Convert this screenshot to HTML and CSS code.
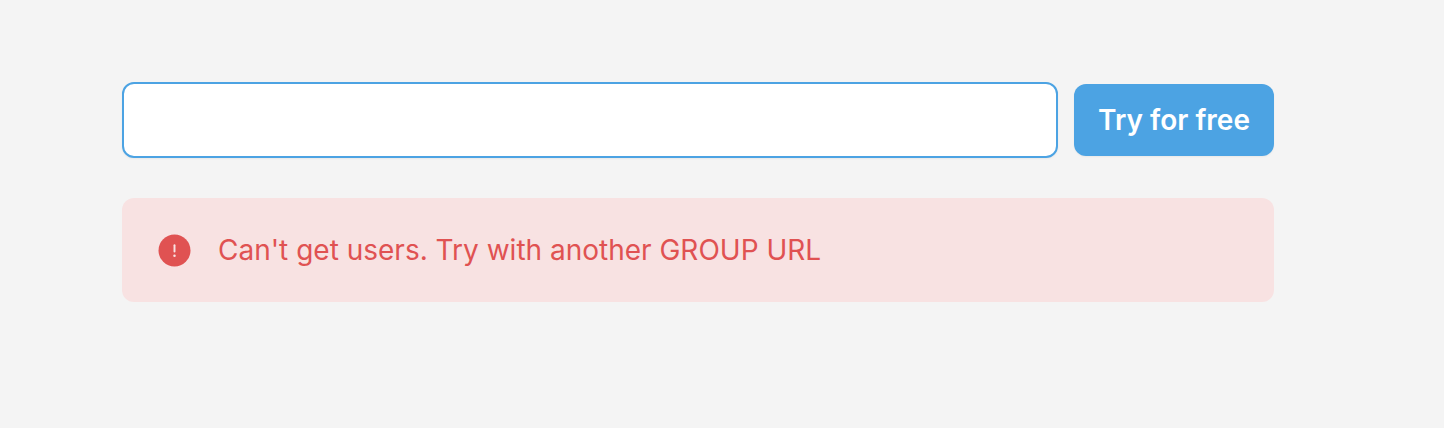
FILE: index.html
```html
<!DOCTYPE html>
<html lang="en">
<head>
  <meta charset="UTF-8" />
  <title>Try for free</title>
  <link rel="stylesheet" href="styles.css">
</head>
<body>
  <main class="signup">
    <form class="signup-row">
      <input class="group-input" type="text" aria-label="Group URL" />
      <button class="try-btn" type="button">Try for free</button>
    </form>
    <div class="alert">
      <svg class="alert-icon" viewBox="0 0 34 34" aria-hidden="true">
        <circle cx="17" cy="17" r="16.5" fill="#e05252" />
        <rect x="16" y="10.5" width="2" height="8.5" rx="1" fill="#f8e3e3" />
        <circle cx="17" cy="22.5" r="1.3" fill="#f8e3e3" />
      </svg>
      <span>Can't get users. Try with another GROUP URL</span>
    </div>
  </main>
</body>
</html>
```

FILE: styles.css
```css
body {
  margin: 0;
  background-color: #f4f4f4;
  font-family: Inter, "Liberation Sans", sans-serif;
}
.signup {
  width: 1152px;
  padding: 82px 0 0 122px;
}
.signup-row {
  display: flex;
  align-items: center;
  gap: 16px;
}
.group-input {
  flex: 1;
  box-sizing: border-box;
  height: 76px;
  background: #ffffff;
  border: 2px solid #4ca3e3;
  border-radius: 12px;
  box-shadow: 0 1px 2px rgba(0, 0, 0, 0.05);
  outline: none;
}
.try-btn {
  width: 200px;
  height: 72px;
  background-color: #4ca3e3;
  color: #ffffff;
  border: none;
  border-radius: 12px;
  box-shadow: 0 1px 2px rgba(0, 0, 0, 0.05);
  font-family: inherit;
  font-size: 28px;
  font-weight: 600;
}
.alert {
  display: flex;
  align-items: center;
  gap: 27px;
  height: 104px;
  box-sizing: border-box;
  margin-top: 40px;
  padding: 0 36px;
  background-color: #f8e2e2;
  border-radius: 12px;
  color: #e05252;
  font-size: 28px;
}
.alert-icon {
  width: 33px;
  height: 33px;
  flex-shrink: 0;
}
```
